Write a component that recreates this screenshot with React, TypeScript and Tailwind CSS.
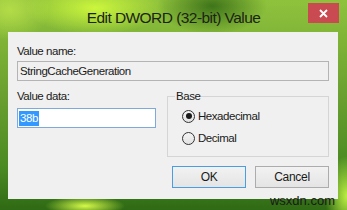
export default function App() {
  return (
    <div className="relative flex h-[210px] w-[347px] flex-col overflow-hidden bg-[radial-gradient(ellipse_70px_26px_at_95px_8px,#ccf63c,transparent),radial-gradient(ellipse_55px_28px_at_212px_6px,#3f741a,transparent),radial-gradient(ellipse_40px_10px_at_85px_206px,#d6fa48,transparent),radial-gradient(ellipse_22px_40px_at_347px_196px,#bdf044,transparent),radial-gradient(ellipse_40px_30px_at_10px_10px,#b4dc48,transparent),linear-gradient(to_bottom,#8fc23c,#6aa030_45%,#4a8a22_80%,#2f6a14)] font-['Liberation_Sans',Arial,sans-serif]">
      {/* title bar */}
      <div className="grid h-[32px] shrink-0 grid-cols-[1fr_auto_1fr]">
        <div />
        <div className="pt-[8px] text-[15.5px] leading-[20px] tracking-[-0.55px] whitespace-nowrap text-[#1c2414]">
          Edit DWORD (32-bit) Value
        </div>
        <div className="flex justify-end pt-[3px] pr-[8px]">
          <button className="flex h-[20px] w-[31px] items-center justify-center bg-[#c94a51]">
            <svg width="9" height="9" viewBox="0 0 9 9">
              <path d="M1 1L8 8M8 1L1 8" stroke="#fff" strokeWidth="1.8" />
            </svg>
          </button>
        </div>
      </div>

      {/* client area */}
      <div className="mr-[9px] ml-[8px] flex h-[167px] shrink-0 flex-col bg-[#f0f0f0] px-[9px] text-[11.5px] leading-[14px] tracking-[-0.45px] text-[#1a1a1a]">
        <div className="pt-[12px]">Value name:</div>
        <div className="mt-[3px] flex h-[20px] items-center border border-[#b4b4b4] bg-[#f0f0f0] px-[2px]">
          StringCacheGeneration
        </div>

        <div className="mt-[8px] flex justify-between">
          <div className="flex flex-col">
            <div>Value data:</div>
            <div className="mt-[5px] flex h-[20px] w-[139px] items-center border border-[#7ea9d8] bg-white px-[1px]">
              <span className="bg-[#3399ff] px-[1px] leading-[15px] text-white">38b</span>
            </div>
          </div>

          <fieldset className="m-0 w-[162px] min-w-0 border border-[#d5d5d5] p-0">
            <legend className="ml-[7px] px-[1px]">Base</legend>
            <div className="flex flex-col gap-[8px] pt-[6px] pb-[11px] pl-[14px]">
              <label className="flex items-center gap-[3px]">
                <span className="flex h-[13px] w-[13px] items-center justify-center rounded-full border border-[#333] bg-linear-to-b from-[#f4f4f4] to-[#e2e2e2]">
                  <span className="h-[6px] w-[6px] rounded-full bg-[#1a1a1a]" />
                </span>
                Hexadecimal
              </label>
              <label className="flex items-center gap-[3px]">
                <span className="h-[13px] w-[13px] rounded-full border border-[#333] bg-linear-to-b from-[#f4f4f4] to-[#e2e2e2]" />
                Decimal
              </label>
            </div>
          </fieldset>
        </div>

        <div className="mt-[9px] flex justify-end gap-[9px]">
          <button className="h-[22px] w-[74px] border border-[#4a9de0] bg-linear-to-b from-[#f2f2f2] to-[#e4e4e4] text-[12px] tracking-[-0.3px] text-[#1a1a1a]">
            OK
          </button>
          <button className="h-[22px] w-[74px] border border-[#acacac] bg-linear-to-b from-[#f2f2f2] to-[#e4e4e4] text-[12px] tracking-[-0.3px] text-[#1a1a1a]">
            Cancel
          </button>
        </div>
      </div>

      <div className="absolute right-[12px] bottom-[3px] text-[13px] leading-[13px] text-[#1a1a1a]">
        wsxdn.com
      </div>
    </div>
  )
}
